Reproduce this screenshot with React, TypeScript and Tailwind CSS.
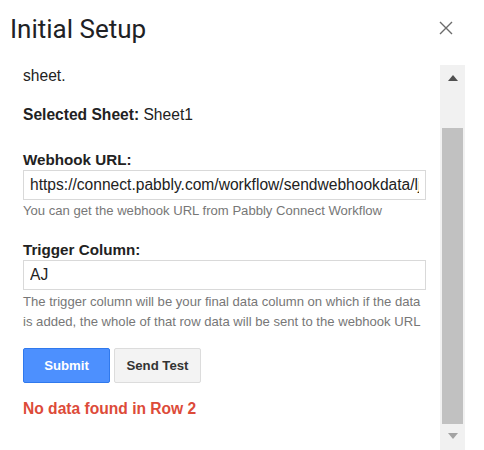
import React from "react";

function CloseIcon() {
  return (
    <svg width="14" height="14" viewBox="0 0 14 14" className="block">
      <path d="M1 1 L13 13 M13 1 L1 13" stroke="#6b6b6b" strokeWidth="1.4" fill="none" />
    </svg>
  );
}

function Scrollbar() {
  return (
    <div className="flex w-[25px] flex-col bg-[#f1f1f1]">
      <div className="flex h-[25px] items-start justify-center pt-[10px]">
        <svg width="10" height="6" viewBox="0 0 10 6" className="block">
          <polygon points="5,0 10,6 0,6" fill="#505050" />
        </svg>
      </div>
      <div className="h-[38px]" />
      <div className="mx-[2px] h-[296px] bg-[#c1c1c1]" />
      <div className="flex h-[26px] items-start justify-center pt-[9px]">
        <svg width="10" height="6" viewBox="0 0 10 6" className="block">
          <polygon points="0,0 10,0 5,6" fill="#a3a3a3" />
        </svg>
      </div>
    </div>
  );
}

export default function App() {
  return (
    <div
      className="relative h-[450px] w-[484px] overflow-hidden bg-white text-[#222]"
      style={{ fontFamily: '"Liberation Sans", Arial, sans-serif' }}
    >
      {/* Dialog header */}
      <div className="flex h-[65px] items-start justify-between">
        <h1
          className="pl-[10px] pt-[14px] text-[26px] font-normal leading-[30px] text-[#202124]"
          style={{ fontFamily: 'Roboto, "Liberation Sans", sans-serif' }}
        >
          Initial Setup
        </h1>
        <button className="mr-[31px] mt-[21px] p-0">
          <CloseIcon />
        </button>
      </div>

      {/* Scrollable body */}
      <div className="flex h-[385px]">
        <div className="w-[440px] pl-[23px] pt-[2px]">
          <p className="text-[15.6px] leading-[18px]">sheet.</p>

          <p className="mt-[21px] text-[15.6px] leading-[18px]">
            <b>Selected Sheet:</b> Sheet1
          </p>

          <div className="mt-[27px]">
            <label className="block text-[15.2px] font-bold leading-[18px]">Webhook URL:</label>
            <input
              readOnly
              value="https://connect.pabbly.com/workflow/sendwebhookdata/ljY2MDUwNTZmMDYzMTA0MzE1MjZmNTUzNDUxMzMi_pc"
              className="mt-[1px] box-border block h-[30px] w-[403px] border border-[#d9d9d9] px-[6px] text-[15.6px] text-[#222] outline-none"
            />
            <p className="mt-[1px] text-[13.1px] leading-[20px] text-[#777]">
              You can get the webhook URL from Pabbly Connect Workflow
            </p>
          </div>

          <div className="mt-[20px]">
            <label className="block text-[15.2px] font-bold leading-[18px]">Trigger Column:</label>
            <input
              readOnly
              value="AJ"
              className="mt-[1px] box-border block h-[30px] w-[403px] border border-[#d9d9d9] px-[6px] text-[15.6px] text-[#222] outline-none"
            />
            <p className="mt-[2px] w-[404px] text-[13.1px] leading-[20px] text-[#777]">
              The trigger column will be your final data column on which if the data is added, the whole of that row data will be sent to the webhook URL
            </p>
          </div>

          <div className="mt-[16px] flex gap-[4px]">
            <button className="box-border h-[35px] w-[87px] rounded-[2px] border border-[#3079ed] bg-[#4d90fe] text-[13.2px] font-bold text-white">
              Submit
            </button>
            <button className="box-border h-[35px] w-[87px] rounded-[2px] border border-[#dcdcdc] bg-[#f3f3f3] text-[13.2px] font-bold text-[#333]">
              Send Test
            </button>
          </div>

          <p className="mt-[17px] text-[15.6px] font-bold leading-[18px] text-[#dd4b39]">
            No data found in Row 2
          </p>
        </div>
        <Scrollbar />
      </div>
    </div>
  );
}
